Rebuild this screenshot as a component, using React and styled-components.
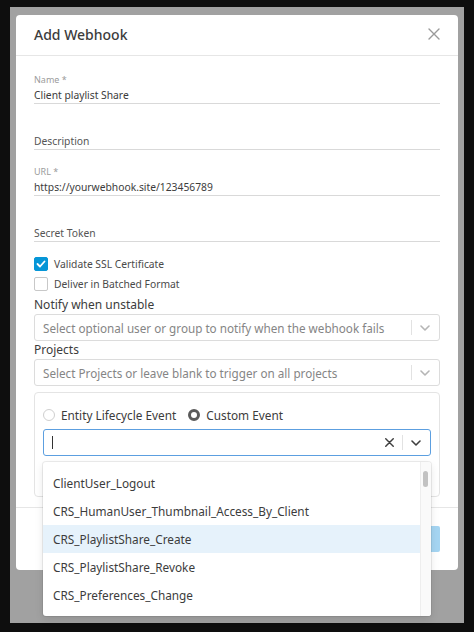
import styled, { createGlobalStyle } from 'styled-components'

const GlobalStyle = createGlobalStyle`
  html, body {
    margin: 0;
    padding: 0;
    background: #0e0e0e;
  }
  body {
    font-family: 'Noto Sans', 'Open Sans', sans-serif;
    color: #3c3c3c;
  }
`

const events = [
  'ClientUser_Logout',
  'CRS_HumanUser_Thumbnail_Access_By_Client',
  'CRS_PlaylistShare_Create',
  'CRS_PlaylistShare_Revoke',
  'CRS_Preferences_Change',
]

const CloseIcon = ({ size = 12, color = '#9a9a9a', stroke = 1.4 }) => (
  <svg width={size} height={size} viewBox="0 0 12 12">
    <path d="M1 1L11 11M11 1L1 11" stroke={color} strokeWidth={stroke} strokeLinecap="round" />
  </svg>
)

const Chevron = ({ color = '#b5b5b5' }) => (
  <svg width="10" height="6" viewBox="0 0 10 6">
    <path d="M1 1L5 5L9 1" stroke={color} strokeWidth="1.6" fill="none" strokeLinecap="round" strokeLinejoin="round" />
  </svg>
)

const Check = () => (
  <svg width="10" height="8" viewBox="0 0 10 8">
    <path d="M1.5 4L4 6.5L8.5 1.5" stroke="#fff" strokeWidth="1.8" fill="none" strokeLinecap="round" strokeLinejoin="round" />
  </svg>
)

const TextField = ({ label, value, placeholder }) => (
  <Field>
    <FieldLabel>{label}</FieldLabel>
    <FieldInput $placeholder={!value}>{value || placeholder}</FieldInput>
  </Field>
)

const Select = ({ placeholder }) => (
  <SelectBox>
    <SelectText>{placeholder}</SelectText>
    <Indicators>
      <Separator />
      <Chevron />
    </Indicators>
  </SelectBox>
)

const App = () => {
  return (
    <>
      <GlobalStyle />
      <Page>
        <Backdrop>
          <Modal>
            <Header>
              <Title>Add Webhook</Title>
              <CloseIcon />
            </Header>
            <Body>
              <TextField label="Name *" value="Client playlist Share" />
              <TextField placeholder="Description" />
              <TextField label="URL *" value="https://yourwebhook.site/123456789" />
              <TextField placeholder="Secret Token" />
              <CheckRow>
                <CheckBox $checked>
                  <Check />
                </CheckBox>
                Validate SSL Certificate
              </CheckRow>
              <CheckRow>
                <CheckBox />
                Deliver in Batched Format
              </CheckRow>
              <SectionLabel $gap={2}>Notify when unstable</SectionLabel>
              <Select placeholder="Select optional user or group to notify when the webhook fails" />
              <SectionLabel>Projects</SectionLabel>
              <Select placeholder="Select Projects or leave blank to trigger on all projects" />
              <EventBox>
                <RadioRow>
                  <RadioOption>
                    <Radio />
                    Entity Lifecycle Event
                  </RadioOption>
                  <RadioOption>
                    <Radio $checked />
                    Custom Event
                  </RadioOption>
                </RadioRow>
                <MenuAnchor>
                  <SelectBox $focused>
                    <Caret />
                    <Indicators>
                      <CloseIcon size={9} color="#3f3f3f" stroke={1.9} />
                      <Separator />
                      <Chevron color="#3f3f3f" />
                    </Indicators>
                  </SelectBox>
                  <ErrorText>Invalid value</ErrorText>
                  <Menu>
                    <Options>
                      {events.map((name, i) => (
                        <Option key={name} $active={i === 2}>
                          {name}
                        </Option>
                      ))}
                    </Options>
                    <Scrollbar>
                      <Thumb />
                    </Scrollbar>
                  </Menu>
                </MenuAnchor>
              </EventBox>
            </Body>
            <Footer>
              <SaveButton disabled>Save</SaveButton>
            </Footer>
          </Modal>
        </Backdrop>
      </Page>
    </>
  )
}

export default App

const Page = styled.div`
  height: 632px;
  padding: 7px 10px 9px 10px;
  box-sizing: border-box;
`

const Backdrop = styled.div`
  height: 616px;
  background: #a1a1a1;
  padding: 8px 6px 0 6px;
  box-sizing: border-box;
`

const Modal = styled.div`
  background: #fff;
  border-radius: 4px;
  height: 555px;
  display: flex;
  flex-direction: column;
`

const Header = styled.div`
  height: 41px;
  box-sizing: border-box;
  padding: 0 18px 2px 18px;
  border-bottom: 1px solid #e6e6e6;
  display: flex;
  align-items: center;
  justify-content: space-between;
`

const Title = styled.h2`
  margin: 0;
  font-size: 14px;
  font-weight: 500;
  color: #3c3c3c;
`

const Body = styled.div`
  flex: 1;
  padding: 17px 18px 0 18px;
`

const Field = styled.div`
  border-bottom: 1px solid #d9d9d9;
  margin-bottom: 15px;
`

const FieldLabel = styled.div`
  height: 12px;
  font-size: 9px;
  line-height: 13px;
  color: #9b9b9b;
`

const FieldInput = styled.div`
  height: 18px;
  font-size: 10.3px;
  line-height: 20px;
  color: ${(p) => (p.$placeholder ? '#555' : '#3c3c3c')};
`

const CheckRow = styled.label`
  display: flex;
  align-items: center;
  gap: 6px;
  height: 20px;
  font-size: 10.3px;
  color: #4a4a4a;
  &:first-of-type {
    margin-top: -3px;
  }
`

const CheckBox = styled.span`
  width: 14px;
  height: 14px;
  box-sizing: border-box;
  border-radius: 2px;
  display: inline-flex;
  align-items: center;
  justify-content: center;
  background: ${(p) => (p.$checked ? '#0696d7' : '#fff')};
  border: 1px solid ${(p) => (p.$checked ? '#0696d7' : '#c8c8c8')};
`

const SectionLabel = styled.div`
  font-size: 12px;
  line-height: 18px;
  color: #3c3c3c;
  margin-top: ${(p) => p.$gap || 0}px;
`

const SelectBox = styled.div`
  height: 27px;
  box-sizing: border-box;
  border: 1px solid ${(p) => (p.$focused ? '#5c9fe0' : '#dcdcdc')};
  border-radius: 3px;
  display: flex;
  align-items: center;
  padding-left: 8px;
`

const SelectText = styled.div`
  flex: 1;
  font-size: 11.7px;
  color: #858585;
  white-space: nowrap;
  overflow: hidden;
`

const Caret = styled.span`
  flex: 1;
  &::before {
    content: '';
    display: block;
    width: 1px;
    height: 13px;
    background: #333;
  }
`

const Indicators = styled.div`
  display: flex;
  align-items: center;
  gap: 8px;
  padding-right: 9px;
`

const Separator = styled.span`
  width: 1px;
  height: 15px;
  background: #e2e2e2;
`

const EventBox = styled.div`
  margin-top: 6px;
  border: 1px solid #e4e4e4;
  border-radius: 4px;
  padding: 12px 8px 24px 8px;
`

const RadioRow = styled.div`
  display: flex;
  gap: 12px;
  height: 20px;
  align-items: center;
  margin-bottom: 4px;
`

const RadioOption = styled.label`
  display: flex;
  align-items: center;
  gap: 6px;
  font-size: 11.8px;
  color: #3c3c3c;
`

const Radio = styled.span`
  width: 12px;
  height: 12px;
  box-sizing: border-box;
  border-radius: 50%;
  border: ${(p) => (p.$checked ? '3px solid #5a5a5a' : '1px solid #cfcfcf')};
  background: #fff;
`

const MenuAnchor = styled.div`
  position: relative;
`

const ErrorText = styled.div`
  text-align: right;
  font-size: 10px;
  line-height: 12px;
  color: #e0303a;
  padding-top: 4px;
  padding-right: 2px;
`

const Menu = styled.div`
  position: absolute;
  top: 33px;
  left: 0;
  right: 0;
  height: 154px;
  background: #fff;
  border-radius: 3px;
  box-shadow: 0 0 0 1px rgba(0, 0, 0, 0.07), 0 3px 8px rgba(0, 0, 0, 0.1);
  display: flex;
  overflow: hidden;
  z-index: 2;
`

const Options = styled.div`
  flex: 1;
  padding-top: 7px;
`

const Option = styled.div`
  height: 28px;
  line-height: 28px;
  padding-left: 10px;
  font-size: 11.8px;
  color: #3c3c3c;
  background: ${(p) => (p.$active ? '#e6f2fb' : 'transparent')};
`

const Scrollbar = styled.div`
  width: 11px;
  background: #fafafa;
  border-left: 1px solid #eeeeee;
  padding: 9px 0 0 2px;
  box-sizing: border-box;
`

const Thumb = styled.div`
  width: 5px;
  height: 16px;
  border-radius: 3px;
  background: #c2c2c2;
`

const Footer = styled.div`
  height: 62px;
  border-top: 1px solid #e6e6e6;
  display: flex;
  align-items: center;
  justify-content: flex-end;
  padding: 0 18px;
`

const SaveButton = styled.button`
  height: 26px;
  padding: 0 22px;
  border: none;
  border-radius: 2px;
  background: #a5d5f2;
  color: #fff;
  font-family: inherit;
  font-size: 12px;
`
